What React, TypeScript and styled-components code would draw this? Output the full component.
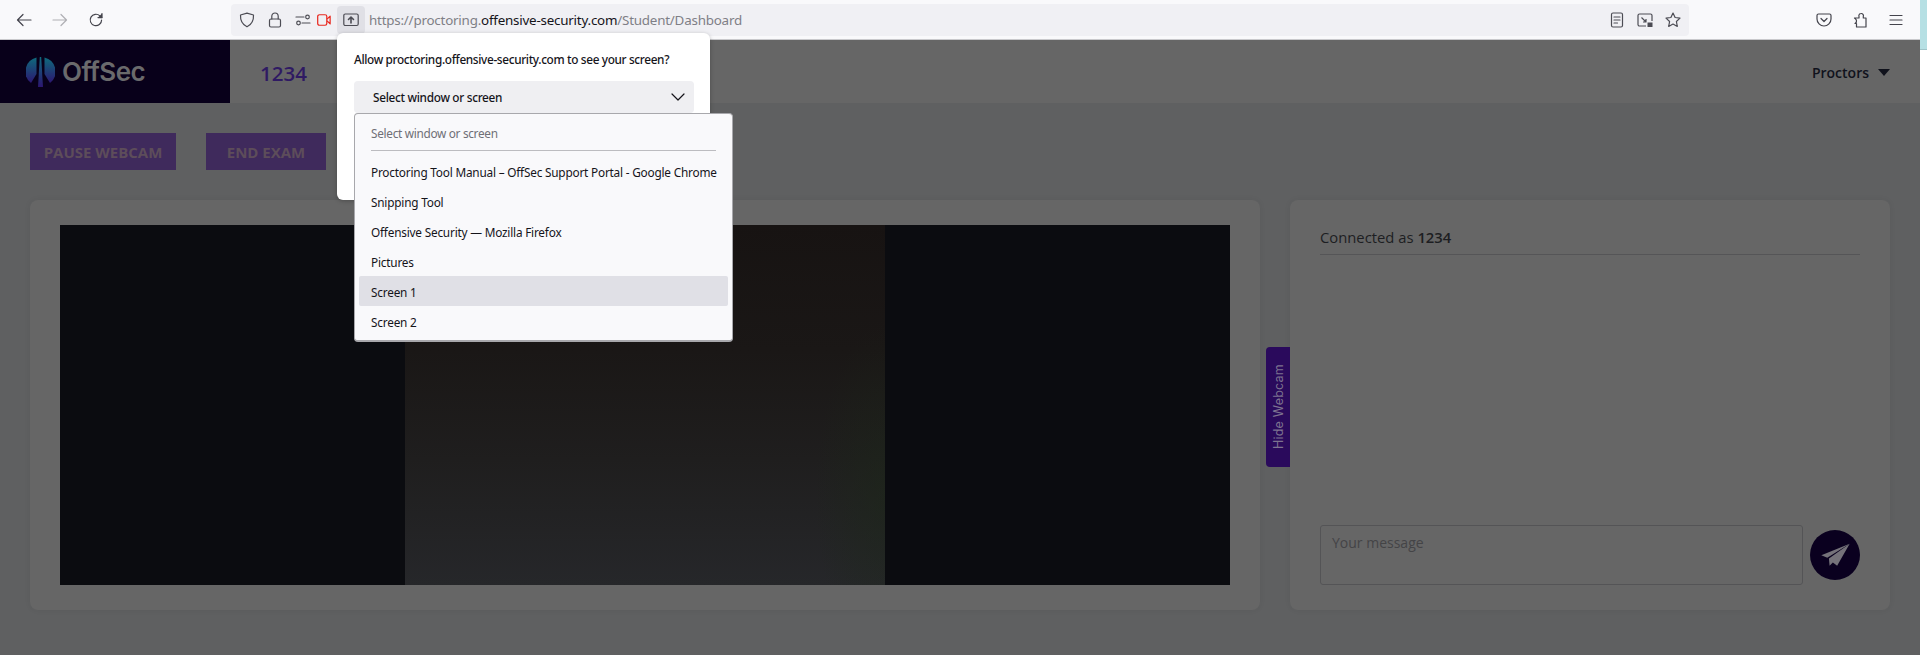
import React from 'react';
import styled, {createGlobalStyle} from 'styled-components';

const Global = createGlobalStyle`
  html, body {
    margin: 0;
    padding: 0;
    background: #ffffff;
    overflow: hidden;
  }
  * { box-sizing: border-box; }
`

const Shell = styled.div`
  display: flex;
  width: 1927px;
  height: 655px;
  overflow: hidden;
  position: relative;
`

const Window = styled.div`
  width: 1920px;
  height: 655px;
  display: flex;
  flex-direction: column;
  background: #5f6061;
  font-family: "Open Sans", sans-serif;
`

const Strip = styled.div`
  width: 7px;
  height: 50px;
  background: #b6e0e4;
  border-bottom: 1px solid #9fc4c8;
`

const Toolbar = styled.div`
  height: 40px;
  flex: none;
  display: flex;
  align-items: center;
  padding: 0 6px;
  background: #f9f9fb;
  border-bottom: 1px solid #c9c9cc;
`

const NavGroup = styled.div`
  display: flex;
`

const ToolButton = styled.div<{$faded?: boolean}>`
  width: 36px;
  height: 36px;
  display: flex;
  align-items: center;
  justify-content: center;
  color: #44444c;
  opacity: ${props => props.$faded ? 0.4 : 1};
`

const UrlBar = styled.div`
  flex: 1;
  height: 32px;
  margin: 0 117px;
  padding-left: 2px;
  display: flex;
  align-items: center;
  background: #f0f0f4;
  border-radius: 4px;
  color: #4c4c54;
`

const UrlIcon = styled.div<{$width?: number}>`
  width: ${props => props.$width || 28}px;
  height: 28px;
  flex: none;
  display: flex;
  align-items: center;
  justify-content: center;
`

const ShareButton = styled(UrlIcon)`
  background: #e0e0e6;
  border-radius: 4px;
  margin-left: 6px;
`

const UrlText = styled.div`
  margin-left: 4px;
  font-family: "Noto Sans", sans-serif;
  font-size: 13.4px;
  white-space: nowrap;
  color: #7f7f86;
  letter-spacing: -0.22px;
  flex: 1;
`

const UrlHost = styled.span`
  color: #15141a;
`

const UrlActions = styled.div`
  display: flex;
  padding-right: 2px;
`

const Header = styled.header`
  height: 63px;
  flex: none;
  display: flex;
  align-items: center;
  background: #666666;
`

const LogoBlock = styled.div`
  width: 230px;
  height: 100%;
  padding-left: 26px;
  display: flex;
  align-items: center;
  gap: 7px;
  background: #08001a;
`

const LogoText = styled.span`
  font-family: "Inter", sans-serif;
  font-size: 26px;
  font-weight: 600;
  letter-spacing: -0.6px;
  color: #6a6a6c;
`

const ExamId = styled.div`
  margin-left: 30px;
  padding-top: 2px;
  font-size: 20.5px;
  font-weight: 600;
  color: #2f1a63;
`

const Proctors = styled.div`
  margin-left: auto;
  margin-right: 30px;
  padding-top: 2px;
  display: flex;
  align-items: center;
  gap: 9px;
  font-size: 14px;
  font-weight: 600;
  color: #10121c;
`

const Caret = styled.span`
  width: 0;
  height: 0;
  border-left: 6px solid transparent;
  border-right: 6px solid transparent;
  border-top: 7px solid #10121c;
`

const Content = styled.main`
  flex: 1;
  padding: 30px 30px 45px 30px;
  display: flex;
  flex-direction: column;
  gap: 30px;
`

const Actions = styled.div`
  display: flex;
  gap: 30px;
`

const ActionButton = styled.div<{$width: number}>`
  width: ${props => props.$width}px;
  height: 37px;
  display: flex;
  align-items: center;
  justify-content: center;
  background: #3f2a5c;
  color: #5d4d5a;
  font-size: 15px;
  font-weight: 700;
`

const Columns = styled.div`
  position: relative;
  display: flex;
  gap: 30px;
  height: 410px;
`

const Card = styled.section`
  background: #666666;
  border-radius: 8px;
  box-shadow: 0 0 6px rgba(0, 0, 0, 0.06);
`

const VideoCard = styled(Card)`
  width: 1230px;
  padding: 25px 30px;
`

const Video = styled.div`
  height: 360px;
  display: flex;
  justify-content: center;
  background: #0b0c10;
`

const Camera = styled.div`
  width: 480px;
  background:
    radial-gradient(ellipse 70px 170px at 100% 75%, rgba(28, 40, 24, 0.5), rgba(28, 40, 24, 0)),
    linear-gradient(180deg, #171312 0%, #1a1716 35%, #1f1e1e 65%, #26272a 100%);
`

const HideTab = styled.div`
  position: absolute;
  left: 1236px;
  top: 147px;
  width: 24px;
  height: 120px;
  display: flex;
  align-items: center;
  justify-content: center;
  background: #2a0a5c;
  border-radius: 0 4px 4px 0;
  color: #7d7390;
  font-family: "Inter", sans-serif;
  font-size: 12.5px;
  letter-spacing: 0.2px;
  writing-mode: vertical-rl;
  transform: rotate(180deg);
`

const ChatCard = styled(Card)`
  width: 600px;
  padding: 25px 30px;
  display: flex;
  flex-direction: column;
`

const ChatTitle = styled.div`
  height: 30px;
  border-bottom: 1px solid #555557;
  font-size: 14.8px;
  line-height: 25px;
  color: #1d1e22;
`

const ChatUser = styled.b`
  font-weight: 600;
`

const ChatFooter = styled.div`
  margin-top: auto;
  display: flex;
  align-items: center;
  gap: 7px;
`

const MessageBox = styled.div`
  flex: 1;
  height: 60px;
  padding: 7px 11px;
  border: 1px solid #545456;
  border-radius: 3px;
  font-size: 14px;
  color: #444446;
`

const SendButton = styled.div`
  width: 50px;
  height: 50px;
  flex: none;
  display: flex;
  align-items: center;
  justify-content: center;
  border-radius: 50%;
  background: #0a001f;
`

const PermissionPanel = styled.div`
  position: absolute;
  left: 337px;
  top: 33px;
  width: 373px;
  height: 167px;
  padding: 15px 17px;
  background: #ffffff;
  border-radius: 6px;
  box-shadow: 0 1px 4px rgba(0, 0, 0, 0.25);
  font-family: "Noto Sans", sans-serif;
  color: #15141a;
`

const PanelTitle = styled.div`
  font-size: 11.8px;
  line-height: 22px;
  font-weight: 500;
  letter-spacing: -0.34px;
  white-space: nowrap;
`

const SelectBox = styled.div`
  margin-top: 11px;
  width: 340px;
  height: 32px;
  padding: 0 8px 0 19px;
  display: flex;
  align-items: center;
  justify-content: space-between;
  background: #efeff2;
  border-radius: 4px;
  font-size: 11.8px;
  font-weight: 500;
  letter-spacing: -0.3px;
`

const Menu = styled.div`
  position: absolute;
  left: 354px;
  top: 113px;
  width: 379px;
  height: 229px;
  padding: 4px;
  display: flex;
  flex-direction: column;
  background: #f9f9fb;
  border: 1px solid #a8a8ac;
  border-bottom-width: 2px;
  border-radius: 4px;
  font-family: "Noto Sans", sans-serif;
  font-size: 11.8px;
  letter-spacing: -0.2px;
  color: #15141a;
`

const MenuHeading = styled.div`
  height: 34px;
  padding: 0 0 2px 12px;
  display: flex;
  align-items: center;
  letter-spacing: -0.3px;
  color: #6f6f76;
`

const MenuDivider = styled.div`
  height: 1px;
  margin: 0 12px 5px;
  background: #bcbcc0;
`

const MenuItem = styled.div<{$active?: boolean}>`
  height: 30px;
  flex: none;
  padding: 2px 0 0 12px;
  display: flex;
  align-items: center;
  white-space: nowrap;
  border-radius: 2px;
  background: ${props => props.$active ? '#e0e0e6' : 'transparent'};
`

const Stroke = ({size = 16, children}: {size?: number, children: React.ReactNode}) => (
    <svg width={size} height={size} viewBox="0 0 16 16" fill="none" stroke="currentColor" strokeWidth="1.2" strokeLinecap="round" strokeLinejoin="round">
        {children}
    </svg>
)

const windows = ['Proctoring Tool Manual – OffSec Support Portal - Google Chrome', 'Snipping Tool', 'Offensive Security — Mozilla Firefox', 'Pictures', 'Screen 1', 'Screen 2']

const App = () => {
    return (
        <Shell>
            <Global/>
            <Window>
                <Toolbar>
                    <NavGroup>
                        <ToolButton>
                            <Stroke><path d="M15 8H1.5M7 2.5 1.5 8 7 13.5"/></Stroke>
                        </ToolButton>
                        <ToolButton $faded>
                            <Stroke><path d="M1 8h13.5M9 2.5 14.5 8 9 13.5"/></Stroke>
                        </ToolButton>
                        <ToolButton>
                            <Stroke><path d="M13.6 8a5.7 5.7 0 1 1-1.7-4.1L13.8 5.5"/><path d="M14 1.6v4h-4" fill="currentColor"/></Stroke>
                        </ToolButton>
                    </NavGroup>
                    <UrlBar>
                        <UrlIcon>
                            <Stroke><path d="M8 1.2 14.5 3c.3 5.8-2 9.6-6.5 11.8C3.5 12.6 1.2 8.8 1.5 3z"/></Stroke>
                        </UrlIcon>
                        <UrlIcon>
                            <Stroke><rect x="2.5" y="7" width="11" height="8" rx="1.5"/><path d="M4.8 7V4.2a3.2 3.2 0 0 1 6.4 0V7"/></Stroke>
                        </UrlIcon>
                        <UrlIcon>
                            <Stroke><circle cx="3.5" cy="11" r="1.8"/><path d="M7 11h8"/><circle cx="12.5" cy="5" r="1.8"/><path d="M1 5h8"/></Stroke>
                        </UrlIcon>
                        <UrlIcon $width={14}>
                            <svg width="16" height="14" viewBox="0 0 16 14" fill="none" stroke="#e8281f" strokeWidth="1.4" strokeLinejoin="round">
                                <rect x="0.8" y="1" width="10.4" height="12" rx="2"/>
                                <path d="M11.5 6 15 2.5v9L11.5 8"/>
                            </svg>
                        </UrlIcon>
                        <ShareButton>
                            <Stroke><rect x="0.8" y="2" width="14.4" height="11.5" rx="1.5"/><path d="M8 11V5.500M5.500 7.500 8 5l2.500 2.500" strokeWidth="1.6"/></Stroke>
                        </ShareButton>
                        <UrlText>https://proctoring.<UrlHost>offensive-security.com</UrlHost>/Student/Dashboard</UrlText>
                        <UrlActions>
                            <UrlIcon>
                                <Stroke><rect x="2.5" y="1" width="11" height="14" rx="1.5"/><path d="M5 5h6M5 8h6M5 11h3.5"/></Stroke>
                            </UrlIcon>
                            <UrlIcon>
                                <svg width="16" height="16" viewBox="0 0 16 16" fill="none" stroke="currentColor" strokeWidth="1.2" strokeLinejoin="round">
                                    <path d="M9 14H2.5A1.5 1.5 0 0 1 1 12.5v-9A1.5 1.5 0 0 1 2.5 2h11A1.5 1.5 0 0 1 15 3.5V9"/>
                                    <path d="M4.5 5.5 9 10M9 7v3H6"/>
                                    <rect x="10.5" y="10.5" width="5" height="4.5" fill="currentColor" stroke="none"/>
                                </svg>
                            </UrlIcon>
                            <UrlIcon>
                                <Stroke><path d="m8 1 2.1 4.5 4.9.6-3.6 3.4.9 4.9L8 12l-4.300 2.400.9-4.900L1 6.100l4.900-.6z"/></Stroke>
                            </UrlIcon>
                        </UrlActions>
                    </UrlBar>
                    <NavGroup>
                        <ToolButton>
                            <Stroke><path d="M2.5 2h11A1.5 1.5 0 0 1 15 3.5V7A7 7 0 0 1 1 7V3.5A1.5 1.5 0 0 1 2.5 2z"/><path d="m5 6.5 3 3 3-3"/></Stroke>
                        </ToolButton>
                        <ToolButton>
                            <Stroke><path d="M2.5 6H7V4.500a2.200 2.200 0 0 1 2-3 2.200 2.200 0 0 1 2.300 3V6H14v9H4.500v-3.500H3a2.800 2.800 0 0 0 1.500-2.800C4.500 7.500 3.500 7 2.500 6z"/></Stroke>
                        </ToolButton>
                        <ToolButton>
                            <Stroke><path d="M2 3.5h12M2 8h12M2 12.5h12"/></Stroke>
                        </ToolButton>
                    </NavGroup>
                </Toolbar>
                <Header>
                    <LogoBlock>
                        <svg width="29" height="30" viewBox="0 0 29 30">
                            <defs>
                                <linearGradient id="logoFill" x1="0" y1="0" x2="0" y2="1">
                                    <stop offset="0" stopColor="#0f6a7c"/>
                                    <stop offset="1" stopColor="#2c1670"/>
                                </linearGradient>
                            </defs>
                            <path d="M10.5.5A14.500 14.500 0 0 0 5 26l5.500-9z" fill="url(#logoFill)"/>
                            <path d="M18.5.5A14.500 14.500 0 0 1 24 26l-5.500-9z" fill="url(#logoFill)"/>
                            <path d="M13.8 0h1.400l1.800 30h-5z" fill="url(#logoFill)"/>
                        </svg>
                        <LogoText>OffSec</LogoText>
                    </LogoBlock>
                    <ExamId>1234</ExamId>
                    <Proctors>Proctors<Caret/></Proctors>
                </Header>
                <Content>
                    <Actions>
                        <ActionButton $width={146}>PAUSE WEBCAM</ActionButton>
                        <ActionButton $width={120}>END EXAM</ActionButton>
                    </Actions>
                    <Columns>
                        <VideoCard>
                            <Video><Camera/></Video>
                        </VideoCard>
                        <HideTab>Hide Webcam</HideTab>
                        <ChatCard>
                            <ChatTitle>Connected as <ChatUser>1234</ChatUser></ChatTitle>
                            <ChatFooter>
                                <MessageBox>Your message</MessageBox>
                                <SendButton>
                                    <svg width="33" height="28" viewBox="115 125 100 85" fill="#75727a">
                                        <path d="M122 168 208 133 140 176z"/>
                                        <path d="M208 133 145 178 147 200 157 190 170 200z"/>
                                    </svg>
                                </SendButton>
                            </ChatFooter>
                        </ChatCard>
                    </Columns>
                </Content>
            </Window>
            <Strip/>
            <PermissionPanel>
                <PanelTitle>Allow proctoring.offensive-security.com to see your screen?</PanelTitle>
                <SelectBox>
                    Select window or screen
                    <Stroke><path d="m2 5 6 6 6-6"/></Stroke>
                </SelectBox>
            </PermissionPanel>
            <Menu>
                <MenuHeading>Select window or screen</MenuHeading>
                <MenuDivider/>
                {windows.map(name => <MenuItem key={name} $active={name === 'Screen 1'}>{name}</MenuItem>)}
            </Menu>
        </Shell>
    )
}

export default App
